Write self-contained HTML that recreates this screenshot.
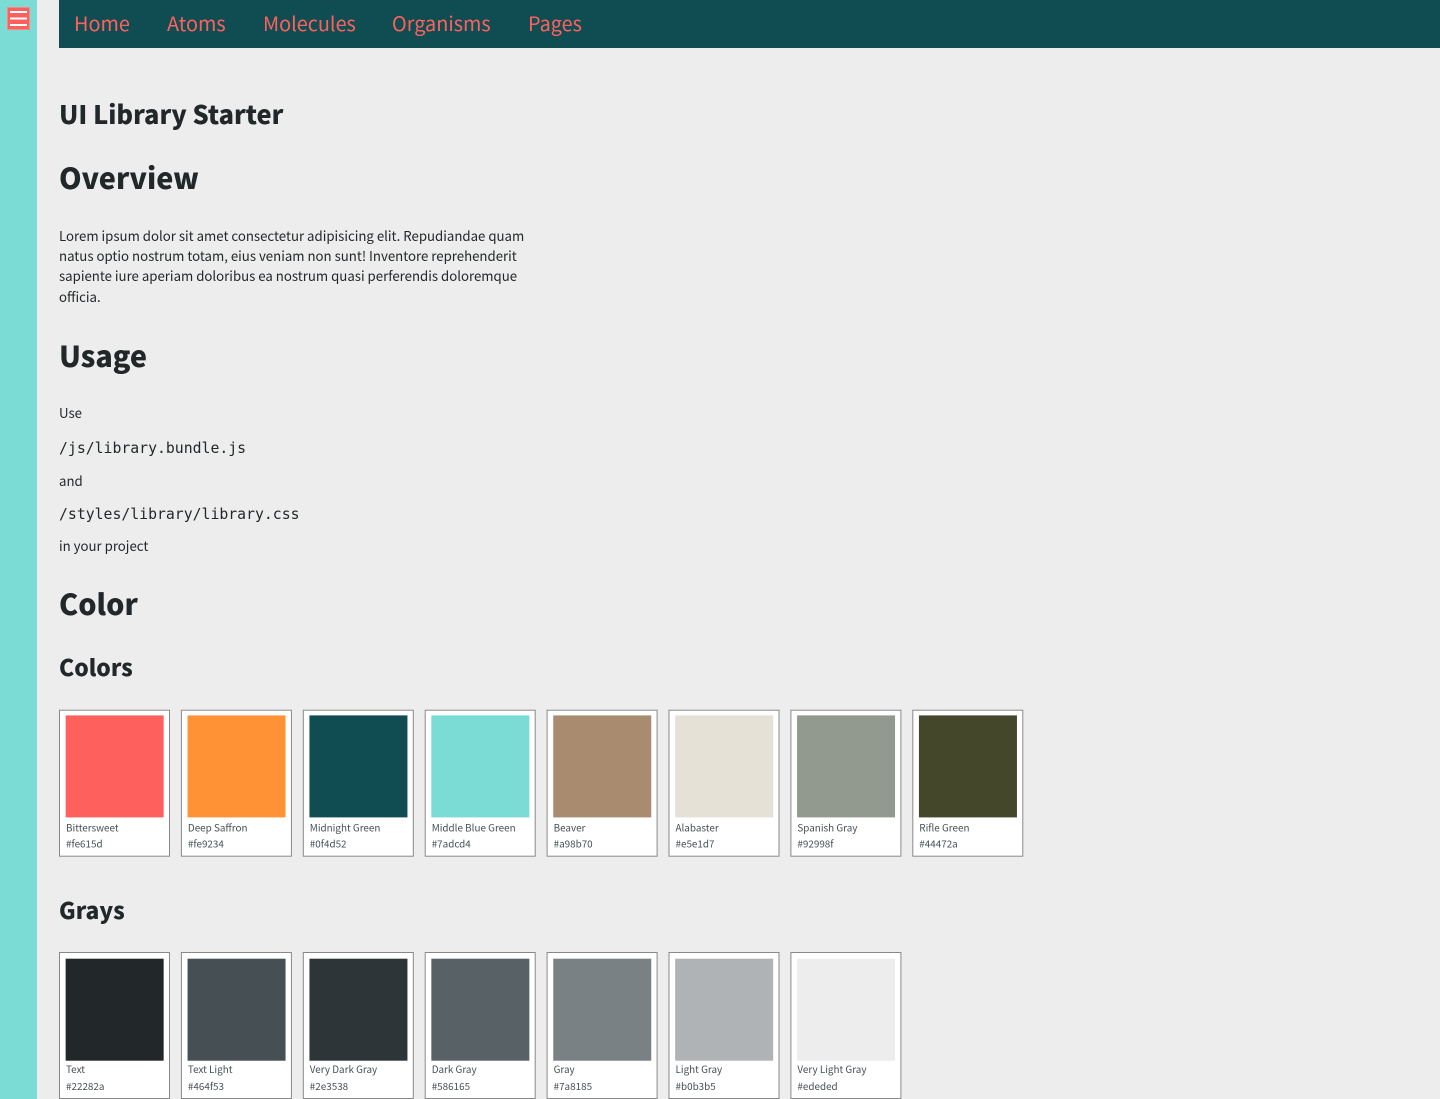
<!DOCTYPE html>
<html lang="en">
<head>
<meta charset="utf-8">
<title>UI Library Starter</title>
<style>
html,body{margin:0;padding:0;width:1440px;height:1099px;overflow:hidden;background:#ededed;}
body{position:relative;font-family:"Noto Sans CJK SC","Liberation Sans",sans-serif;color:#22282a;}
.t{position:absolute;white-space:nowrap;margin:0;}
#side{position:absolute;left:0;top:0;width:37px;height:1099px;background:#7adcd4;}
#burger{position:absolute;left:7px;top:7px;width:23px;height:23px;background:#fe615d;box-shadow:inset 0 0 0 1px #f58a88;}
#burger i{position:absolute;left:3px;width:17px;height:2px;background:#fff;}
#nav{position:absolute;left:59px;top:0;right:0;height:48px;background:#0f4d52;}
.n{position:absolute;top:7px;font-size:19.85px;line-height:32px;color:#fe615d;white-space:nowrap;}
.h1{font-weight:900;font-size:28.8px;line-height:40px;left:59px;}
.h2{font-weight:900;font-size:22.8px;line-height:30px;left:59px;}
.title{font-weight:900;font-size:25.4px;line-height:36px;left:59px;}
.p{font-size:13.23px;line-height:20.3px;left:59px;}
.m{font-family:"DejaVu Sans Mono","Liberation Mono",monospace;font-size:14.8px;line-height:20px;left:59px;}
.c{position:absolute;width:109px;height:145px;background:#fff;border:1px solid #888;}
.c b{position:absolute;left:6px;top:5px;width:98px;height:102px;display:block;transform:translate(-.35px,-.3px);}
.c span{position:absolute;left:6px;font-size:9.9px;line-height:14px;color:#464f53;white-space:nowrap;}
.c .a{top:110px;}
.c .b{top:126px;}
.g .a{top:109px;}
</style>
</head>
<body>
<div id="side"><div id="burger"><i style="top:4px"></i><i style="top:10px;transform:translateY(.5px)"></i><i style="top:17px"></i></div></div>
<div id="nav">
<span class="n" style="left:15px">Home</span>
<span class="n" style="left:108px">Atoms</span>
<span class="n" style="left:204px">Molecules</span>
<span class="n" style="left:333px">Organisms</span>
<span class="n" style="left:469px">Pages</span>
</div>
<div class="t title" style="top:96px">UI Library Starter</div>
<div class="t h1" style="top:158px">Overview</div>
<div class="t p" style="top:226px">Lorem ipsum dolor sit amet consectetur adipisicing elit. Repudiandae quam</div>
<div class="t p" style="top:246px">natus optio nostrum totam, eius veniam non sunt! Inventore reprehenderit</div>
<div class="t p" style="top:266px">sapiente iure aperiam doloribus ea nostrum quasi perferendis doloremque</div>
<div class="t p" style="top:287px">officia.</div>
<div class="t h1" style="top:336px">Usage</div>
<div class="t p" style="top:403px">Use</div>
<div class="t m" style="top:439px">/js/library.bundle.js</div>
<div class="t p" style="top:471px">and</div>
<div class="t m" style="top:505px">/styles/library/library.css</div>
<div class="t p" style="top:536px">in your project</div>
<div class="t h1" style="top:584px">Color</div>
<div class="t h2" style="top:652px">Colors</div>
<div class="c" style="left:59px;top:710px;transform:translate(0,-.3px)"><b style="background:#fe615d"></b><span class="a">Bittersweet</span><span class="b">#fe615d</span></div>
<div class="c" style="left:181px;top:710px;transform:translate(-.1px,-.3px)"><b style="background:#fe9234"></b><span class="a">Deep Saffron</span><span class="b">#fe9234</span></div>
<div class="c" style="left:303px;top:710px;transform:translate(-.2px,-.3px)"><b style="background:#0f4d52"></b><span class="a">Midnight Green</span><span class="b">#0f4d52</span></div>
<div class="c" style="left:425px;top:710px;transform:translate(-.3px,-.3px)"><b style="background:#7adcd4"></b><span class="a">Middle Blue Green</span><span class="b">#7adcd4</span></div>
<div class="c" style="left:547px;top:710px;transform:translate(-.4px,-.3px)"><b style="background:#a98b70"></b><span class="a">Beaver</span><span class="b">#a98b70</span></div>
<div class="c" style="left:669px;top:710px;transform:translate(-.5px,-.3px)"><b style="background:#e5e1d7"></b><span class="a">Alabaster</span><span class="b">#e5e1d7</span></div>
<div class="c" style="left:791px;top:710px;transform:translate(-.6px,-.3px)"><b style="background:#92998f"></b><span class="a">Spanish Gray</span><span class="b">#92998f</span></div>
<div class="c" style="left:913px;top:710px;transform:translate(-.7px,-.3px)"><b style="background:#44472a"></b><span class="a">Rifle Green</span><span class="b">#44472a</span></div>
<div class="t h2" style="top:895px">Grays</div>
<div class="c g" style="left:59px;top:952px"><b style="background:#22282a;top:6px"></b><span class="a">Text</span><span class="b">#22282a</span></div>
<div class="c g" style="left:181px;top:952px;transform:translateX(-.1px)"><b style="background:#464f53;top:6px"></b><span class="a">Text Light</span><span class="b">#464f53</span></div>
<div class="c g" style="left:303px;top:952px;transform:translateX(-.2px)"><b style="background:#2e3538;top:6px"></b><span class="a">Very Dark Gray</span><span class="b">#2e3538</span></div>
<div class="c g" style="left:425px;top:952px;transform:translateX(-.3px)"><b style="background:#586165;top:6px"></b><span class="a">Dark Gray</span><span class="b">#586165</span></div>
<div class="c g" style="left:547px;top:952px;transform:translateX(-.4px)"><b style="background:#7a8185;top:6px"></b><span class="a">Gray</span><span class="b">#7a8185</span></div>
<div class="c g" style="left:669px;top:952px;transform:translateX(-.5px)"><b style="background:#b0b3b5;top:6px"></b><span class="a">Light Gray</span><span class="b">#b0b3b5</span></div>
<div class="c g" style="left:791px;top:952px;transform:translateX(-.6px)"><b style="background:#ededed;top:6px"></b><span class="a">Very Light Gray</span><span class="b">#ededed</span></div>
</body>
</html>
